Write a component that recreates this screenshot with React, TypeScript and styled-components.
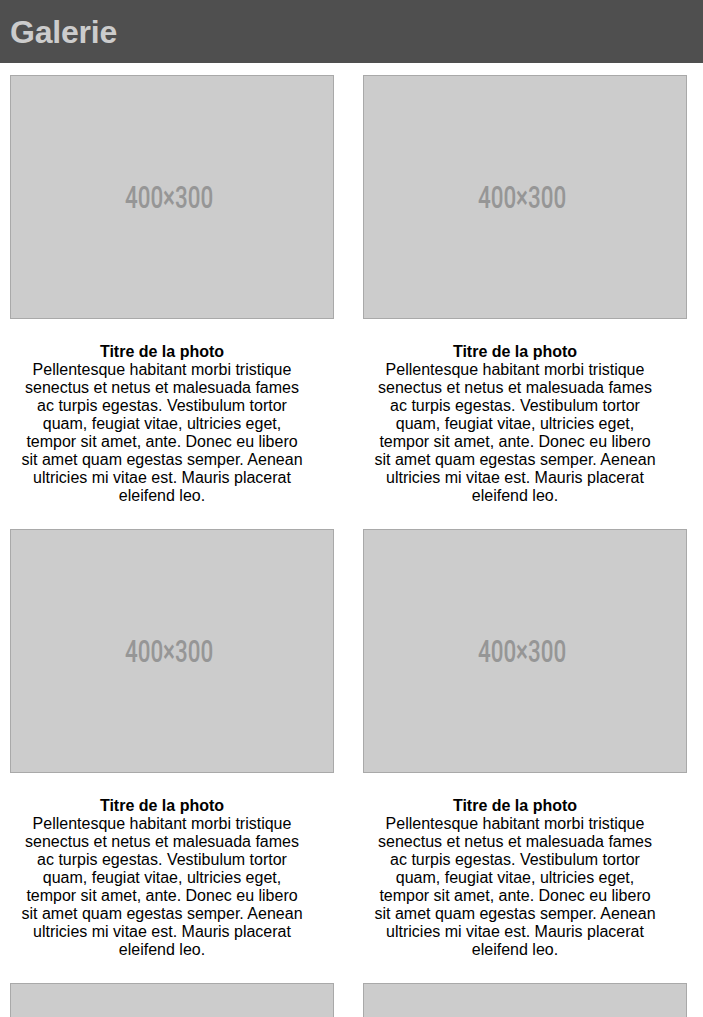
import * as React from "react";
import styled, { createGlobalStyle } from "styled-components";

const GlobalStyle = createGlobalStyle`
  html, body {
    margin: 0;
    padding: 0;
    background: #fff;
  }
  body {
    font-family: "Liberation Sans", Arial, Helvetica, sans-serif;
    color: #000;
  }
`;

const Header = styled.header`
  height: 63px;
  background: #4f4f4f;
  display: flex;
  align-items: center;
  padding: 1px 10px 0;
  box-sizing: border-box;
`;

const Title = styled.h1`
  margin: 0;
  font-size: 32px;
  font-weight: bold;
  color: #cccccc;
  letter-spacing: -0.2px;
`;

const Grid = styled.main`
  display: grid;
  grid-template-columns: 324px 324px;
  column-gap: 29px;
  padding: 12px 10px 0;
`;

const Figure = styled.figure`
  margin: 0;
  display: flex;
  flex-direction: column;
`;

const Placeholder = styled.div`
  height: 244px;
  box-sizing: border-box;
  background: #cccccc;
  border: 1px solid #a9a9a9;
  display: flex;
  align-items: center;
  justify-content: center;
`;

const PlaceholderLabel = styled.span`
  font-family: Roboto, "DejaVu Sans", sans-serif;
  font-size: 32px;
  font-weight: 500;
  color: #969696;
  display: inline-block;
  transform: scaleX(0.7);
  margin-left: -5px;
`;

const Caption = styled.figcaption`
  padding: 24px 28px 24px 8px;
  text-align: center;
  font-size: 16px;
  line-height: 18px;
`;

const CaptionTitle = styled.strong`
  display: block;
  font-weight: bold;
`;

const body =
  "Pellentesque habitant morbi tristique senectus et netus et malesuada fames ac turpis egestas. Vestibulum tortor quam, feugiat vitae, ultricies eget, tempor sit amet, ante. Donec eu libero sit amet quam egestas semper. Aenean ultricies mi vitae est. Mauris placerat eleifend leo.";

const photos = Array.from({ length: 6 }, (_, i) => i);

export default function App() {
  return (
    <>
      <GlobalStyle />
      <Header>
        <Title>Galerie</Title>
      </Header>
      <Grid>
        {photos.map((i) => (
          <Figure key={i}>
            <Placeholder>
              <PlaceholderLabel>400×300</PlaceholderLabel>
            </Placeholder>
            <Caption>
              <CaptionTitle>Titre de la photo</CaptionTitle>
              {body}
            </Caption>
          </Figure>
        ))}
      </Grid>
    </>
  );
}
